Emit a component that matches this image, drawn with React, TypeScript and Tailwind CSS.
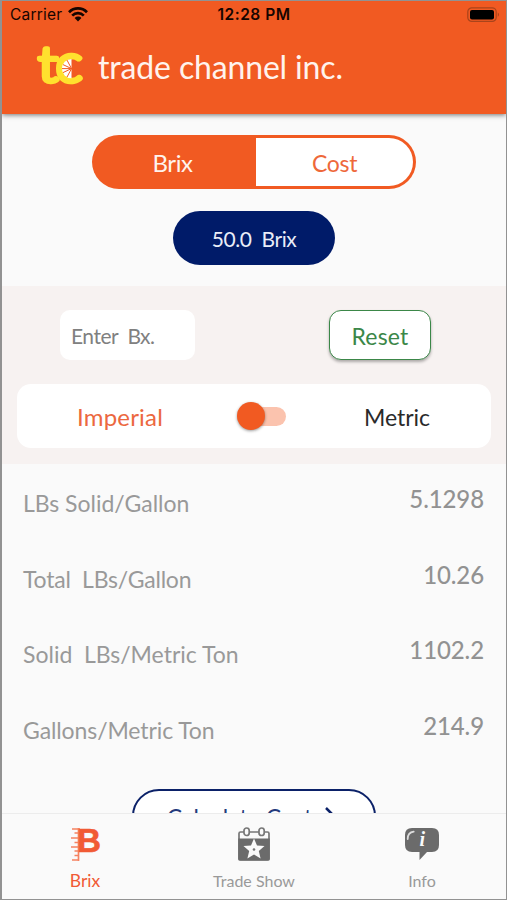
import React from 'react';

interface Reading {
  label: string;
  value: string;
  labelClass: string;
}

const readings: Reading[] = [
  { label: 'LBs Solid/Gallon', value: '5.1298', labelClass: 'tracking-normal' },
  { label: 'Total  LBs/Gallon', value: '10.26', labelClass: 'tracking-[-0.2px]' },
  { label: 'Solid  LBs/Metric Ton', value: '1102.2', labelClass: 'tracking-normal' },
  { label: 'Gallons/Metric Ton', value: '214.9', labelClass: 'tracking-[-0.1px]' },
];

const WifiIcon = () => (
  <svg className="ml-[6px] h-[15px] w-5" viewBox="0 0 20 15" fill="none" stroke="#160500" strokeWidth="2.7">
    <path d="M1 5.2C6 .2 14 .2 19 5.2" />
    <path d="M4.2 8.6c3.3-3.3 8.3-3.3 11.6 0" />
    <path d="M6.6 10.9c2-1.9 4.8-1.9 6.8 0L10 14.5z" fill="#160500" stroke="none" />
  </svg>
);

const BatteryIcon = () => (
  <svg className="h-4 w-[33px]" viewBox="0 0 33 16" fill="none">
    <rect x=".8" y=".8" width="28.4" height="13.6" rx="4" stroke="#a9441b" strokeWidth="1.2" />
    <rect x="3" y="3" width="24" height="9.4" rx="2" fill="#000" />
    <path d="M30.8 5.5c1.6.8 1.6 3.4 0 4.2z" fill="#a9441b" />
  </svg>
);

const Logo = () => (
  <svg className="h-[78px] w-[52px]" viewBox="0 0 52 78">
    <g fontFamily="Lato" fill="#ffe12e" stroke="#ffe12e" strokeLinejoin="round" strokeLinecap="round" fontWeight="300">
      <text x="2" y="53.5" fontSize="50" strokeWidth="4.6" textLength="20" lengthAdjust="spacingAndGlyphs">t</text>
      <text x="19.5" y="53.5" fontSize="53" strokeWidth="4.6" textLength="27" lengthAdjust="spacingAndGlyphs">c</text>
    </g>
    <path d="M35.5 31a9.6 9.6 0 0 0 0 19.2z" fill="#fff" />
    <path d="M35.5 40.6l-4.5-8.5M35.5 40.6l-8.5-4M35.5 40.6H26M35.5 40.6l-8.5 4M35.5 40.6l-4.5 8.5" stroke="#f15a22" strokeWidth="1" />
  </svg>
);

const BrixIcon = () => (
  <svg className="-mb-1 -mt-3 h-[52px] w-9" viewBox="0 -12 36 52">
    <path d="M10.5 2v33M4 3h8M6.5 7H12M3 12h9M6.5 16.5H12M3 21h9M6.5 25H12M6.5 29.5H11M4 34h7" fill="none" stroke="#f58261" strokeWidth="1.7" />
    <text x="9" y="26" fontFamily="Liberation Sans" fontSize="34" fontWeight="700" fill="#f15a35" stroke="#f15a35" strokeWidth=".6" textLength="24" lengthAdjust="spacingAndGlyphs">B</text>
  </svg>
);

const CalendarIcon = () => (
  <svg className="h-9 w-9" viewBox="0 0 36 36">
    <rect x="3" y="6" width="30" height="28" rx="1.5" fill="#fafafa" stroke="#777" strokeWidth="1.7" />
    <path d="M2.2 12.5h31.6V33q0 1.5-1.5 1.5H3.7Q2.2 34.5 2.2 33z" fill="#6b6b6b" />
    <rect x="8" y="2" width="5.2" height="7.5" rx="2.6" fill="#fafafa" stroke="#777" strokeWidth="1.7" />
    <rect x="23" y="2" width="5.2" height="7.5" rx="2.6" fill="#fafafa" stroke="#777" strokeWidth="1.7" />
    <path d="M18 12.5l3 7 7.5.6-5.700 4.900 1.800 7.500-6.600-4-6.600 4 1.800-7.500-5.700-4.900 7.500-.6z" fill="#fafafa" />
    <circle cx="18" cy="23.5" r="1.3" fill="#777" />
  </svg>
);

const InfoIcon = () => (
  <svg className="h-9 w-9" viewBox="0 0 36 36">
    <path d="M8 2h20q7 0 7 7v10q0 7-7 7h-5L15.5 34v-8H8q-7 0-7-7V9q0-7 7-7z" fill="#6b6b6b" />
    <path d="M3.7 13q0-6.5 6-7.3" fill="none" stroke="#ddd" strokeWidth="1.8" strokeLinecap="round" />
    <text x="15.5" y="20" fontFamily="Liberation Serif" fontSize="20" fontStyle="italic" fontWeight="700" fill="#fafafa">i</text>
  </svg>
);

const App: React.FC = () => {
  return (
    <div className="relative flex h-[900px] w-[507px] flex-col overflow-hidden border border-l-2 border-[#929292] bg-[#fafafa] font-['Lato',sans-serif]">
      <header className="relative z-10 h-[113px] shrink-0 bg-[#f15a22] shadow-[0_1px_5px_rgba(0,0,0,0.55)]">
        <div className="grid h-[27px] grid-cols-3 items-center pl-2 pr-[6px] font-['Inter',sans-serif] text-[#160500]">
          <div className="flex items-center text-[15.5px]">
            <span className="tracking-[0.2px]">Carrier</span>
            <WifiIcon />
          </div>
          <span className="pr-0.5 text-center text-[15.5px] font-semibold tracking-[0.5px]">12:28 PM</span>
          <div className="flex justify-end">
            <BatteryIcon />
          </div>
        </div>
        <div className="flex h-[78px] items-center pl-[34px]">
          <Logo />
          <h1 className="ml-[10px] text-[32px] leading-none tracking-[-0.15px] text-[#fff3ed]">trade channel inc.</h1>
        </div>
      </header>

      <section className="flex h-[172px] shrink-0 flex-col items-center pt-[21px]">
        <div className="flex h-[54px] w-[324px] rounded-full bg-[#f15a22] p-[3px]">
          <button className="w-[161px] pr-[6px] pt-0.5 text-[24px] tracking-[-0.4px] text-[#fff3ed]">Brix</button>
          <button className="flex-1 rounded-r-full bg-white pt-0.5 text-[23px] tracking-[-0.3px] text-[#ee683a]">Cost</button>
        </div>
        <div className="mt-[22px] flex h-[54px] w-[162px] items-center justify-center whitespace-pre rounded-full bg-[#001b69] pt-0.5 text-[21px] tracking-[-0.4px] text-[#e9edf8]">50.0  Brix</div>
      </section>

      <section className="h-[178px] shrink-0 bg-[#f7f2f1] pt-6">
        <div className="flex h-[50px] justify-between pl-[58px] pr-[75px]">
          <div className="flex w-[135px] items-center whitespace-pre rounded-[10px] bg-white pl-[11px] pt-0.5 text-[21px] tracking-[-0.5px] text-[#808080]">Enter  Bx.</div>
          <button className="w-[102px] rounded-[12px] border-[1.5px] border-[#3b8748] bg-white pt-0.5 text-[23px] tracking-[0.2px] text-[#3b8748] shadow-[0_2px_3px_rgba(0,0,0,0.3)]">Reset</button>
        </div>
        <div className="mx-[15px] mt-6 grid h-[64px] grid-cols-[206px_86px_1fr] items-center rounded-[14px] bg-white text-center text-[24px]">
          <span className="pt-0.5 tracking-[0.2px] text-[#ec6840]">Imperial</span>
          <div className="flex items-center pl-[14px]">
            <span className="z-10 h-7 w-7 rounded-full bg-[#f15a22] shadow-[0_1px_3px_rgba(0,0,0,0.4)]" />
            <span className="-ml-[17px] h-[19px] w-[38px] rounded-full bg-[#fbc3ae]" />
          </div>
          <span className="pr-[6px] pt-0.5 text-[23px] text-[#2a2a2a]">Metric</span>
        </div>
      </section>

      <section className="shrink-0 pl-[21px] pr-[22px]">
        {readings.map((reading) => (
          <div key={reading.label} className="flex h-[75.5px] justify-between pt-5 leading-[30px] text-[#999]">
            <span className={`whitespace-pre pt-1 text-[23px] ${reading.labelClass}`}>{reading.label}</span>
            <span className="text-[24px] font-medium tracking-[-0.1px] text-[#929292]">{reading.value}</span>
          </div>
        ))}
      </section>

      <button className="mx-auto mt-[23px] flex h-[56px] w-[244px] shrink-0 items-center justify-center gap-[13px] rounded-[27px] border-[2.5px] border-[#0b2168] bg-white pr-1 text-[23px] text-[#233a7b]">
        Calculate Cost
        <svg className="h-5 w-3" viewBox="0 0 12 20" fill="none" stroke="#0b2168" strokeWidth="2.5">
          <path d="M1 1l9 9-9 9" />
        </svg>
      </button>

      <nav className="absolute inset-x-0 bottom-0 grid h-[86px] grid-cols-3 border-t border-[#ececec] bg-[#fafafa] pt-[12px] text-center text-[16px] leading-5 text-[#999]">
        <div className="flex flex-col items-center text-[#f15a35]">
          <BrixIcon />
          <span className="mt-[9px] pr-0.5 text-[17.5px]">Brix</span>
        </div>
        <div className="flex flex-col items-center">
          <CalendarIcon />
          <span className="mt-[9px]">Trade Show</span>
        </div>
        <div className="flex flex-col items-center">
          <InfoIcon />
          <span className="mt-[9px]">Info</span>
        </div>
      </nav>
    </div>
  );
};

export default App;
